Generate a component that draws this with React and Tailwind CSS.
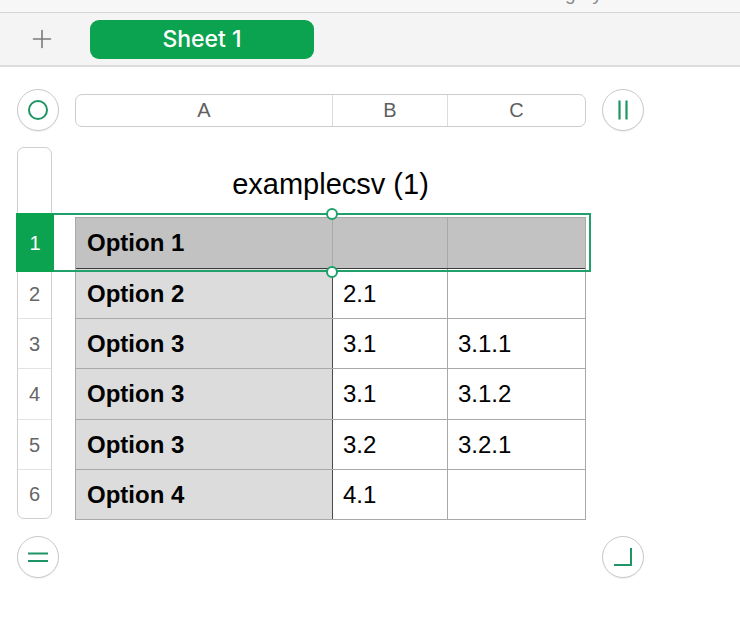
import React from "react";

const FONT = { fontFamily: '"Liberation Sans", Arial, Helvetica, sans-serif' };

function CircleBtn({ children }) {
  return (
    <div className="w-[42px] h-[42px] rounded-full border border-[#c9c9c9] bg-white flex items-center justify-center shrink-0 shadow-[0_1px_1px_rgba(0,0,0,0.06)]">
      {children}
    </div>
  );
}

const rows = [
  { n: 1, a: "Option 1", b: "", c: "", h: 51 },
  { n: 2, a: "Option 2", b: "2.1", c: "", h: 50 },
  { n: 3, a: "Option 3", b: "3.1", c: "3.1.1", h: 50 },
  { n: 4, a: "Option 3", b: "3.1", c: "3.1.2", h: 51 },
  { n: 5, a: "Option 3", b: "3.2", c: "3.2.1", h: 50 },
  { n: 6, a: "Option 4", b: "4.1", c: "", h: 49 },
];

export default function App() {
  return (
    <div className="w-[740px] h-[630px] bg-white overflow-hidden" style={FONT}>
      {/* top strip */}
      <div className="h-[13px] bg-[#f7f7f7] border-b border-[#d6d6d6] overflow-hidden relative">
        <div className="flex justify-end pr-[138px]">
          <span className="text-[19px] leading-[19px] text-[#8a8a8a] -mt-[16px]">Category</span>
        </div>
      </div>
      {/* tab bar */}
      <div className="h-[54px] bg-[#f4f4f4] border-b-2 border-[#dcdcdc] flex items-center">
        <div className="w-[90px] flex items-center justify-center">
          <svg width="20" height="20" viewBox="0 0 20 20" className="-ml-[6px]">
            <path d="M10 1.5V18.5M1.5 10H18.5" stroke="#7a7a7a" strokeWidth="1.6" strokeLinecap="round" />
          </svg>
        </div>
        <div
          className="w-[224px] h-[39px] rounded-[9px] bg-[#0ba34f] flex items-center justify-center text-white text-[23px] font-medium"
          style={{ fontFamily: 'Inter, "Liberation Sans", sans-serif' }}
        >
          Sheet 1
        </div>
      </div>

      {/* toolbar row */}
      <div className="pt-[22px] pl-[17px] flex items-center gap-[16px]">
        <CircleBtn>
          <svg width="22" height="22" viewBox="0 0 22 22">
            <circle cx="11" cy="11" r="9" fill="none" stroke="#1f9465" strokeWidth="2" />
          </svg>
        </CircleBtn>
        <div className="w-[511px] h-[33px] border border-[#cdcdcd] rounded-[7px] flex text-[20px] text-[#5f5f5f] bg-white">
          <div className="w-[257px] border-r border-[#dcdcdc] flex items-center justify-center">A</div>
          <div className="w-[115px] border-r border-[#dcdcdc] flex items-center justify-center">B</div>
          <div className="flex-1 flex items-center justify-center">C</div>
        </div>
        <CircleBtn>
          <svg width="22" height="22" viewBox="0 0 22 22">
            <path d="M7.5 1.5V20.5M14.5 1.5V20.5" stroke="#1f9465" strokeWidth="2.2" />
          </svg>
        </CircleBtn>
      </div>

      {/* sheet body */}
      <div className="relative mt-[16px] pl-[17px] flex gap-[23px]">
        {/* row headers */}
        <div className="w-[35px] h-[372px] border border-[#cfcfcf] rounded-[7px] flex flex-col text-[20px] text-[#666] bg-white">
          <div className="h-[69px]" />
          {rows.map((r) => (
            <div
              key={r.n}
              style={{ height: r.h }}
              className="border-t border-[#e2e2e2] flex items-center justify-center"
            >
              {r.n}
            </div>
          ))}
        </div>

        {/* table */}
        <div className="w-[511px] flex flex-col">
          <div className="h-[70px] flex items-center justify-center text-[29px] text-black pt-[6px]">
            examplecsv (1)
          </div>
          <div className="border border-[#a9a9a9] flex flex-col text-[24px] text-black">
            {rows.map((r, i) => {
              const first = i === 0;
              const last = i === rows.length - 1;
              return (
                <div
                  key={r.n}
                  style={{ height: r.h }}
                  className={
                    "flex " +
                    (first
                      ? "bg-[#c1c2c1] border-b border-[#3a3a3a]"
                      : last
                      ? ""
                      : "border-b border-[#a9a9a9]")
                  }
                >
                  <div
                    className={
                      "w-[257px] border-r flex items-center pl-[11px] font-bold " +
                      (first ? "border-[#a9a9a9]" : "bg-[#dcdcdc] border-[#4a4a4a]")
                    }
                  >
                    {r.a}
                  </div>
                  <div className="w-[115px] border-r border-[#a9a9a9] flex items-center pl-[10px]">
                    {r.b}
                  </div>
                  <div className="flex-1 flex items-center pl-[10px]">{r.c}</div>
                </div>
              );
            })}
          </div>
        </div>

        {/* selection overlay */}
        <div className="absolute left-[16px] top-[66px] w-[575px] h-[59px] border-2 border-[#21a06c] pointer-events-none" />
        <div className="absolute left-[16px] top-[66px] w-[38px] h-[59px] bg-[#0ba34f] flex items-center justify-center text-white text-[20px]">
          1
        </div>
        <div className="absolute left-[326px] top-[61px] w-[12px] h-[12px] rounded-full bg-white border-2 border-[#21a06c]" />
        <div className="absolute left-[326px] top-[119px] w-[12px] h-[12px] rounded-full bg-white border-2 border-[#21a06c]" />
      </div>

      {/* bottom row */}
      <div className="mt-[16px] pl-[17px] flex items-center">
        <CircleBtn>
          <svg width="22" height="22" viewBox="0 0 22 22">
            <path d="M1 7.5H21M1 15H21" stroke="#1f9465" strokeWidth="2" />
          </svg>
        </CircleBtn>
        <div className="w-[543px]" />
        <CircleBtn>
          <svg width="22" height="22" viewBox="0 0 22 22">
            <path d="M19 2V19H2" fill="none" stroke="#1f9465" strokeWidth="2" />
          </svg>
        </CircleBtn>
      </div>
    </div>
  );
}
